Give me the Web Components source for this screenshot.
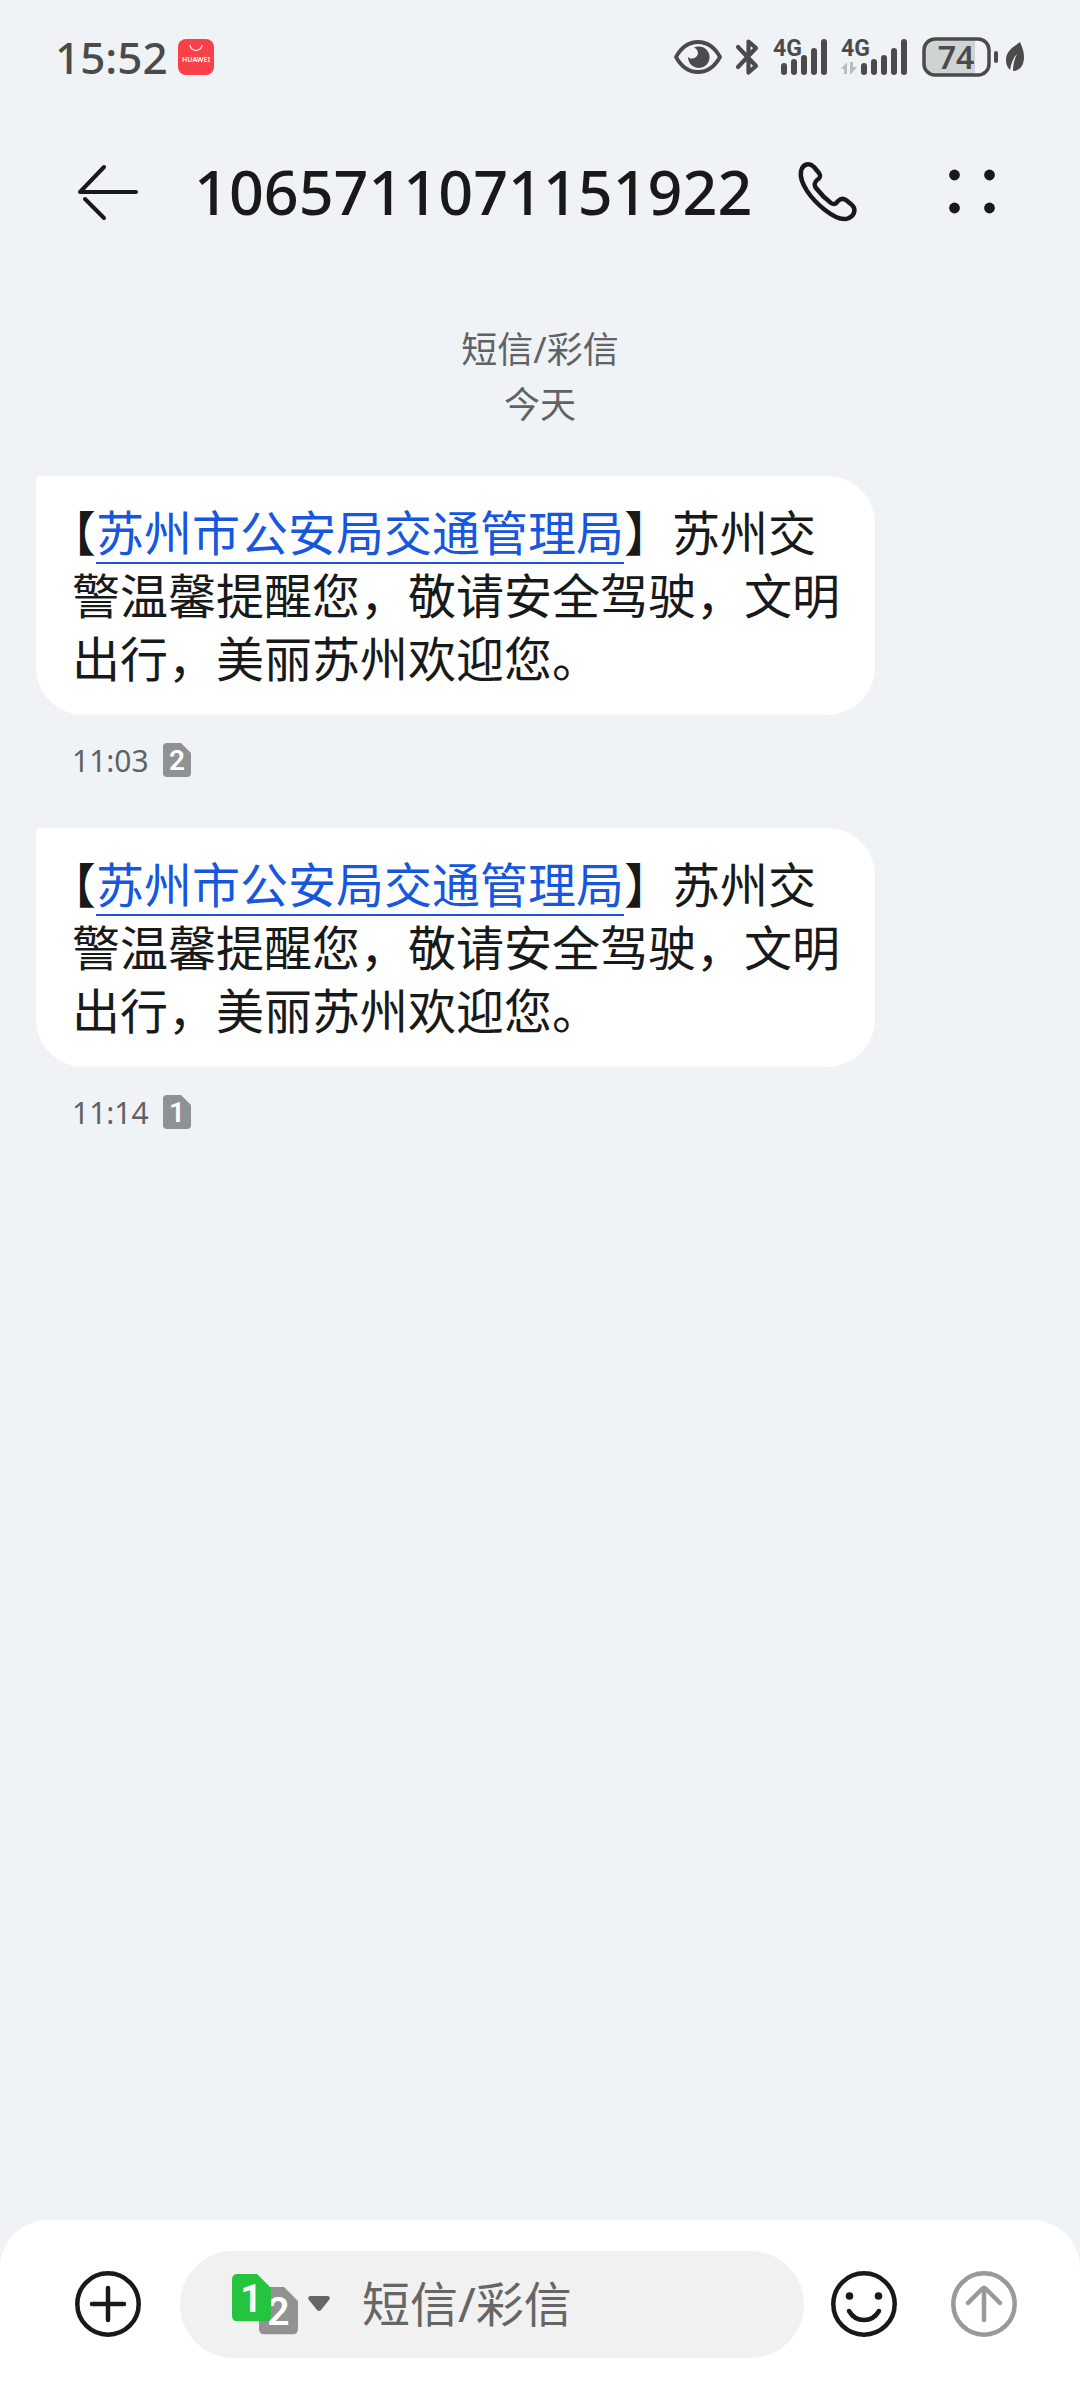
<!DOCTYPE html>
<html lang="zh-CN">
<head>
<meta charset="utf-8">
<meta name="viewport" content="width=device-width, initial-scale=1">
<title>1065711071151922</title>
<style>
  body { margin: 0; background: #eff3f6; font-family: "Noto Sans", "Noto Sans CJK SC", sans-serif; color: #181a1a; }
</style>
</head>
<body>
<sms-app></sms-app>
<script>
const define = (name, html, setup) => {
  const template = document.createElement('template');
  template.innerHTML = html;
  customElements.define(name, class extends HTMLElement {
    constructor() {
      super();
      this.attachShadow({ mode: 'open' }).append(template.content.cloneNode(true));
    }
    connectedCallback() { if (setup) setup(this, this.shadowRoot); }
  });
};

const bars = (x) => [12, 16, 20, 27, 36].map((h, i) =>
  `<rect x="${x + i * 10}" y="${37 - h}" width="6" height="${h}" rx="3"/>`).join('');

define('status-bar', `
  <style>
    :host { display: flex; justify-content: space-between; align-items: center; height: 114px; padding: 0 56px 0 55px; color: #4a4b4c; }
    div { display: flex; align-items: center; gap: 12px; }
    .clock { font-size: 44px; line-height: 60px; font-weight: 500; }
    .left { gap: 10px; }
    .power { gap: 8px; }
    svg { display: block; fill: currentColor; overflow: visible; }
    text { font-family: "Noto Sans", sans-serif; font-weight: 600; }
    .net { font-family: Roboto, sans-serif; font-size: 23px; font-weight: 700; }
  </style>
  <div class="left">
    <span class="clock">15:52</span>
    <svg width="36" height="36" viewBox="0 0 36 36">
      <rect width="36" height="36" rx="8" fill="#fa4149"/>
      <path d="M12 6a6 5.500 0 0 0 12 0" fill="none" stroke="#fff" stroke-width="1.200"/>
      <text x="18" y="23" text-anchor="middle" fill="#fff" font-size="7">HUAWEI</text>
    </svg>
  </div>
  <div>
    <svg width="48" height="38" viewBox="0 0 48 38" aria-label="护眼">
      <path d="M2 19C13 -1 35 -1 46 19C35 39 13 39 2 19Z" fill="none" stroke="currentColor" stroke-width="3.800" stroke-linejoin="round"/>
      <path d="M20 9.500A10.800 10.800 0 1 1 14 19C17 22 23 20.500 24 15.500C24 12.500 22.500 10.500 20 9.500Z"/>
    </svg>
    <svg width="26" height="38" viewBox="0 0 26 38" aria-label="蓝牙">
      <path d="M4 9L22 28L14.500 34.500V23M14.500 15V3.500L22 10L4 29" fill="none" stroke="currentColor" stroke-width="4.200" stroke-linecap="round" stroke-linejoin="round"/>
    </svg>
    <svg width="56" height="38" viewBox="0 0 56 38">
      <text class="net" x="1" y="18">4G</text>${bars(9)}
    </svg>
    <svg width="70" height="38" viewBox="0 0 70 38">
      <text class="net" x="1" y="18">4G</text>
      <path d="M1 31L7 24V36H4V31ZM10 24H13V29H17L11 36H10Z" fill="#b9bcbe"/>${bars(21)}
    </svg>
    <div class="power">
      <svg width="76" height="40" viewBox="0 0 76 40">
        <path d="M13 2H53V38H13Q2 38 2 27V13Q2 2 13 2Z" fill="#cfd3d4"/>
        <rect x="2" y="2" width="65" height="36" rx="11" fill="none" stroke="currentColor" stroke-width="3.500"/>
        <rect x="72" y="14" width="4" height="12" rx="2"/>
        <text x="34" y="32" text-anchor="middle" font-size="32">74</text>
      </svg>
      <svg width="18" height="30" viewBox="0 0 18 30">
        <path d="M14 0C7 5 0 9 0 18C0 23 2 26 4 28C5 22 7 16 11 12C8 18 7 23 7 29C14 29 18 23 18 15C18 9 16 5 14 0Z"/>
      </svg>
    </div>
  </div>
`);

define('icon-button', `
  <style>
    :host { display: block; flex: none; }
    button { display: block; padding: 0; border: 0; background: none; color: inherit; }
    ::slotted(svg) { display: block; fill: none; stroke: currentColor; stroke-linecap: round; stroke-linejoin: round; }
  </style>
  <button type="button"><slot></slot></button>
`, (host, root) => root.querySelector('button').setAttribute('aria-label', host.getAttribute('label')));

define('chat-header', `
  <style>
    :host { display: flex; align-items: center; height: 156px; padding: 0 72px; }
    h1 { flex: 1; margin: 0 0 0 50px; font-size: 61px; line-height: 84px; font-weight: 500; }
    .call { margin-right: 72px; }
  </style>
  <icon-button label="返回">
    <svg width="72" height="72" viewBox="0 0 72 72" stroke-width="4"><path d="M64 36H8L32 11M13 43L32 62"/></svg>
  </icon-button>
  <h1><slot></slot></h1>
  <icon-button class="call" label="呼叫">
    <svg width="72" height="72" viewBox="0 0 72 72" stroke-width="4.500"><path d="M9 15C11 8 17 6 22 11L27 17C29 20 28 22 25 24C22 27 22 29 24 32Q31 41 39 47C42 49 44 48 46 45C48 43 51 42 54 44L60 49C64 53 63 59 57 62C51 65 42 61 33 54C19 43 7 27 9 15Z"/></svg>
  </icon-button>
  <icon-button label="更多">
    <svg width="72" height="72" viewBox="0 0 72 72"><g fill="currentColor" stroke="none"><circle cx="18.500" cy="19" r="5.400"/><circle cx="53.500" cy="19" r="5.400"/><circle cx="18.500" cy="52" r="5.400"/><circle cx="53.500" cy="52" r="5.400"/></g></svg>
  </icon-button>
`);

define('sim-badge', `
  <style>
    :host { display: inline-block; color: #8f9294; }
    svg { display: block; width: var(--sim-width, 28px); height: auto; overflow: visible; }
    text { font-family: Roboto, sans-serif; font-weight: 600; fill: #fff; }
  </style>
  <svg viewBox="0 0 28 34"><path d="M4 0H18L28 10V30Q28 34 24 34H4Q0 34 0 30V4Q0 0 4 0Z" fill="currentColor"/>
  <text x="14" y="27" text-anchor="middle" font-size="28"></text></svg>
`, (host, root) => { root.querySelector('text').textContent = host.getAttribute('slot-number'); });

define('sms-message', `
  <style>
    :host { display: block; margin: 0 36px 34px; }
    .bubble { box-sizing: border-box; width: fit-content; max-width: calc(100% - 169px); margin: 0; padding: 23px 34px 27px 36px; border-radius: 5px 48px 48px 48px; background: #fff; font-size: 48px; line-height: 63px; font-family: "Noto Sans CJK SC", sans-serif; }
    .meta { display: flex; align-items: center; gap: 14px; height: 44px; padding: 23px 36px 12px; font-size: 30px; color: #5f6365; }
  </style>
  <p class="bubble"><slot></slot></p>
  <div class="meta"><time></time><sim-badge></sim-badge></div>
`, (host, root) => {
  root.querySelector('time').textContent = host.getAttribute('time');
  const badge = document.createElement('sim-badge');
  badge.setAttribute('slot-number', host.getAttribute('sim'));
  root.querySelector('sim-badge').replaceWith(badge);
});

define('message-composer', `
  <style>
    :host { display: flex; align-items: center; gap: 24px; height: 168px; padding: 0 60px 0 72px; border-radius: 48px 48px 0 0; background: #fff; }
    .field { box-sizing: border-box; flex: 1; display: flex; align-items: center; min-width: 0; height: 107px; margin: 0 0 0 12px; padding: 0 48px 0 52px; border-radius: 54px; background: #f1f1f1; }
    .sims { display: flex; align-items: center; gap: 10px; margin-right: 32px; padding: 0; border: 0; background: none; color: #666; }
    .pair { display: flex; }
    .pair sim-badge { --sim-width: 39px; margin-top: 13px; color: #929292; }
    .pair sim-badge:first-child { z-index: 1; margin: 0 -12px 13px 0; color: #25c43f; }
    input { flex: 1; min-width: 0; padding: 0; border: 0; background: none; font-family: "Noto Sans", "Noto Sans CJK SC", sans-serif; font-size: 48px; line-height: 72px; height: 72px; }
    input::placeholder { color: #666; opacity: 1; }
    .send { margin-left: 24px; color: #999; }
  </style>
  <icon-button label="添加">
    <svg width="72" height="72" viewBox="0 0 72 72" stroke-width="4.500"><circle cx="36" cy="36" r="30.700"/><path d="M36 20V52M20 36H52"/></svg>
  </icon-button>
  <div class="field">
    <button class="sims" type="button" aria-label="选择 SIM 卡">
      <span class="pair"><sim-badge slot-number="1"></sim-badge><sim-badge slot-number="2"></sim-badge></span>
      <svg width="22" height="16" viewBox="0 0 22 16" fill="currentColor"><path d="M2 0H20Q23 1 21 4L13 14Q11 16 9 14L1 4Q-1 1 2 0Z"/></svg>
    </button>
    <input type="text" placeholder="短信/彩信" aria-label="短信/彩信">
  </div>
  <icon-button label="表情">
    <svg width="72" height="72" viewBox="0 0 72 72" stroke-width="4.500"><circle cx="36" cy="36" r="30.700"/><path d="M21 43C28 55 44 55 51 43"/><g fill="currentColor" stroke="none"><circle cx="21.500" cy="28" r="3.800"/><circle cx="50.500" cy="28" r="3.800"/></g></svg>
  </icon-button>
  <icon-button class="send" label="发送">
    <svg width="72" height="72" viewBox="0 0 72 72" stroke-width="4.500"><circle cx="36" cy="36" r="30.700"/><path d="M36 52V20M20 35L34 21Q36 19 38 21L52 35"/></svg>
  </icon-button>
`);

define('sms-app', `
  <style>
    :host { display: flex; flex-direction: column; min-height: 100vh; }
    main { flex: 1; padding-top: 52px; }
    .note { margin: 0 0 44px; text-align: center; font-size: 36px; line-height: 55px; color: #5f6365; }
    .note span { display: block; }
    a { color: #1757e0; text-decoration: underline; text-decoration-thickness: 2px; text-underline-offset: 11px; text-decoration-skip-ink: none; }
    .open { font-feature-settings: "halt"; }
  </style>
  <status-bar></status-bar>
  <chat-header>1065711071151922</chat-header>
  <main>
    <p class="note"><span>短信/彩信</span><span>今天</span></p>
    <sms-message time="11:03" sim="2"><span class="open">【</span><a href="#">苏州市公安局交通管理局</a>】苏州交警温馨提醒您，敬请安全驾驶，文明出行，美丽苏州欢迎您。</sms-message>
    <sms-message time="11:14" sim="1"><span class="open">【</span><a href="#">苏州市公安局交通管理局</a>】苏州交警温馨提醒您，敬请安全驾驶，文明出行，美丽苏州欢迎您。</sms-message>
  </main>
  <message-composer></message-composer>
`);
</script>
</body>
</html>
